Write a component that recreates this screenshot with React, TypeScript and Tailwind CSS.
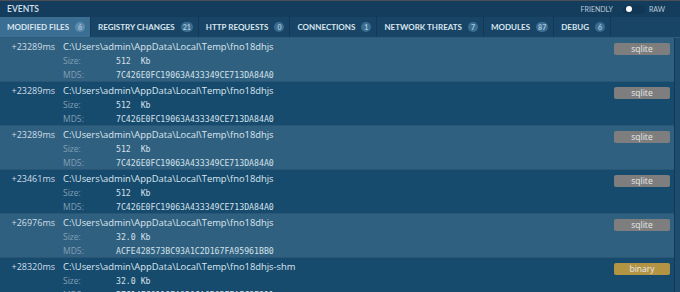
import React from "react";

const tabs = [
    { label: "MODIFIED FILES", count: "6", active: true },
    { label: "REGISTRY CHANGES", count: "21" },
    { label: "HTTP REQUESTS", count: "0" },
    { label: "CONNECTIONS", count: "1" },
    { label: "NETWORK THREATS", count: "7" },
    { label: "MODULES", count: "87" },
    { label: "DEBUG", count: "6" },
];

const events = [
    { time: "+23289ms", path: "C:\\Users\\admin\\AppData\\Local\\Temp\\fno18dhjs", size: "512  Kb", md5: "7C426E0FC19063A433349CE713DA84A0", type: "sqlite" },
    { time: "+23289ms", path: "C:\\Users\\admin\\AppData\\Local\\Temp\\fno18dhjs", size: "512  Kb", md5: "7C426E0FC19063A433349CE713DA84A0", type: "sqlite" },
    { time: "+23289ms", path: "C:\\Users\\admin\\AppData\\Local\\Temp\\fno18dhjs", size: "512  Kb", md5: "7C426E0FC19063A433349CE713DA84A0", type: "sqlite" },
    { time: "+23461ms", path: "C:\\Users\\admin\\AppData\\Local\\Temp\\fno18dhjs", size: "512  Kb", md5: "7C426E0FC19063A433349CE713DA84A0", type: "sqlite" },
    { time: "+26976ms", path: "C:\\Users\\admin\\AppData\\Local\\Temp\\fno18dhjs", size: "32.0 Kb", md5: "ACFE428573BC93A1C2D167FA95961BB0", type: "sqlite" },
    { time: "+28320ms", path: "C:\\Users\\admin\\AppData\\Local\\Temp\\fno18dhjs-shm", size: "32.0 Kb", md5: "B7C14FC6119EA820CA6B65FFAFC8F911", type: "binary" },
];

export default function App() {
    return (
        <div className="w-[680px] h-[292px] overflow-hidden bg-[#184566] border-t border-[#4b4f55] font-['Lato',sans-serif]">
            {/* header */}
            <div className="h-[16px] flex items-center justify-between pl-[7px] pr-[15px] bg-[#143c5c]">
                <span className="text-[8.5px] font-semibold text-[#d6e2ec]">EVENTS</span>
                <div className="flex items-center text-[7px] text-[#b9cbd9]">
                    <span>FRIENDLY</span>
                    <div className="ml-[10px] mr-[4px] w-[22px] h-[9px] rounded-full bg-[#123656] flex items-center pl-[3px]">
                        <div className="w-[6px] h-[6px] rounded-full bg-white" />
                    </div>
                    <span>RAW</span>
                </div>
            </div>

            {/* tabs */}
            <div className="h-[21px] flex bg-[#184566] border-b border-[#2c5b7c]">
                {tabs.map((tab) => (
                    <div
                        key={tab.label}
                        className={
                            "flex items-center pl-[7px] pr-[5px] border-r border-[#12395a] " +
                            (tab.active ? "bg-[#3b6e93]" : "")
                        }
                    >
                        <span className="text-[8px] font-bold text-[#dbe6ef]">{tab.label}</span>
                        <span
                            className={
                                "ml-[6px] min-w-[10px] h-[10px] px-[2px] rounded-full flex items-center justify-center text-[7px] font-bold text-[#a9c4d8] " +
                                (tab.active ? "bg-[#5c8bae]" : "bg-[#3a6d92]")
                            }
                        >
                            {tab.count}
                        </span>
                    </div>
                ))}
            </div>

            {/* rows */}
            <div className="flex">
                <div className="flex-1 border-r border-[#123a58]">
                    {events.map((ev, i) => (
                        <div
                            key={i}
                            className={
                                "h-[44px] flex pt-[2px] leading-[14px] border-b border-[#2a5676] font-['Open_Sans',sans-serif] " +
                                (i % 2 === 0 ? "bg-[#30607f]" : "bg-[#174b6d]")
                            }
                        >
                            <div className="w-[56px] text-right pr-[1px] text-[9px] text-[#cfdde8]">{ev.time}</div>
                            <div className="flex-1 pl-[7px]">
                                <div className="text-[9.4px] text-[#dbe6ee]">{ev.path}</div>
                                <div className="flex text-[8.5px]">
                                    <span className="w-[53px] text-[#829fb7]">Size:</span>
                                    <span className="font-['DejaVu_Sans_Mono',monospace] text-[8.2px] text-[#d3e0ea] whitespace-pre">{ev.size}</span>
                                </div>
                                <div className="flex text-[8.5px]">
                                    <span className="w-[53px] text-[#829fb7]">MD5:</span>
                                    <span className="font-['DejaVu_Sans_Mono',monospace] text-[8.2px] text-[#d3e0ea]">{ev.md5}</span>
                                </div>
                            </div>
                            <div className="pr-[4px] pt-[3px]">
                                <div
                                    className={
                                        "w-[56px] h-[12px] rounded-[2px] flex items-center justify-center text-[8.5px] leading-none text-[#e8e8e8] " +
                                        (ev.type === "binary" ? "bg-[#b29443]" : "bg-[#7e7e7e]")
                                    }
                                >
                                    {ev.type}
                                </div>
                            </div>
                        </div>
                    ))}
                </div>
                <div className="w-[5px] bg-[#1d4c6d]" />
            </div>
        </div>
    );
}
